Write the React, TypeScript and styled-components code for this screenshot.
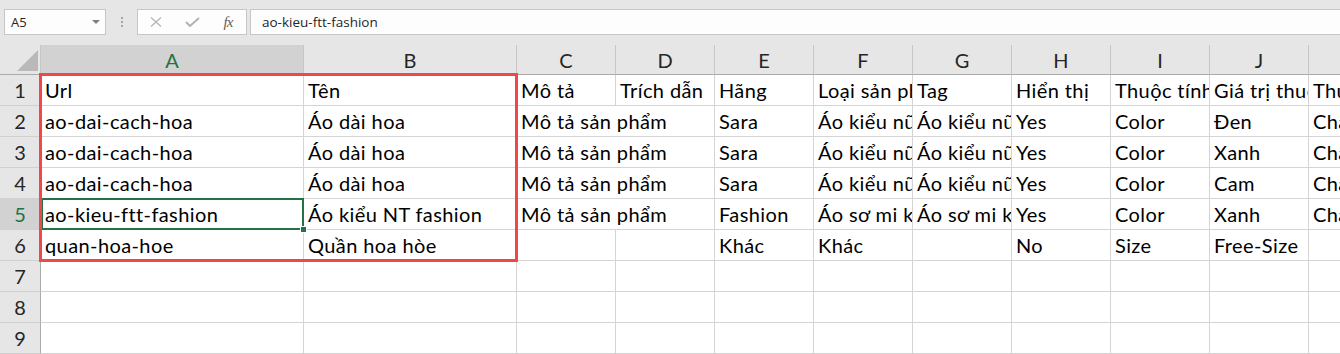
import React from 'react';
import styled, { createGlobalStyle } from 'styled-components';

const GlobalStyle = createGlobalStyle`
  html, body { margin: 0; padding: 0; background: #ffffff; overflow: hidden; }
  #root { width: 1340px; height: 354px; }
`;

const Window = styled.div`
  width: 1340px;
  height: 354px;
  overflow: hidden;
  background: #e6e6e6;
`;

const Toolbar = styled.div`
  height: 45px;
  box-sizing: border-box;
  padding: 9px 0 0 4px;
  display: flex;
  align-items: flex-start;
  background: #e6e6e6;
  font-family: "Open Sans", "Noto Sans", sans-serif;
`;

const Field = styled.div`
  height: 26px;
  box-sizing: border-box;
  border: 1px solid #c6c6c6;
  background: #fdfdfd;
`;

const NameBox = styled(Field)`
  width: 102px;
  display: flex;
  align-items: center;
  justify-content: space-between;
  padding: 0 5px 0 6px;
  font-size: 13px;
  color: #262626;
`;

const Caret = styled.span`
  width: 0;
  height: 0;
  border-left: 4px solid transparent;
  border-right: 4px solid transparent;
  border-top: 4px solid #7f7f7f;
`;

const Grip = styled.div`
  width: 31px;
  height: 26px;
  display: flex;
  flex-direction: column;
  align-items: center;
  justify-content: center;
  gap: 2px;
`;

const GripDot = styled.span`
  width: 2px;
  height: 2px;
  background: #a6a6a6;
`;

const FxBox = styled(Field)`
  width: 110px;
  display: flex;
  align-items: center;
`;

const FxSlot = styled.div`
  width: 36px;
  height: 24px;
  display: flex;
  align-items: center;
  justify-content: center;
`;

const FxGlyph = styled.span`
  font-family: "Liberation Serif", serif;
  font-style: italic;
  font-size: 15px;
  color: #5f5f5f;
  letter-spacing: -1px;
`;

const FormulaInput = styled(Field)`
  flex: 1;
  margin-left: 3px;
  margin-right: -4px;
  padding-left: 11px;
  display: flex;
  align-items: center;
  font-size: 13.5px;
  color: #262626;
`;

const Sheet = styled.div`
  position: relative;
  display: grid;
  grid-template-columns: 41px 263px 213px repeat(9, 99px);
  grid-template-rows: 30px repeat(9, 31px);
  background: #ffffff;
  font-family: Lato, "Noto Sans", sans-serif;
  font-size: 20px;
`;

const Corner = styled.div`
  position: relative;
  box-sizing: border-box;
  background: #e6e6e6;
  border-right: 1px solid #c6c6c6;
  border-bottom: 1px solid #ababab;
  &::after {
    content: "";
    position: absolute;
    left: 17px;
    top: 5px;
    width: 21px;
    height: 21px;
    background: #b9b9b9;
    clip-path: polygon(100% 0, 100% 100%, 0 100%);
  }
`;

const ColHeader = styled.div<{ $active?: boolean }>`
  box-sizing: border-box;
  background: ${(p) => (p.$active ? '#d2d2d2' : '#e6e6e6')};
  color: ${(p) => (p.$active ? '#217346' : '#262626')};
  border-right: 1px solid #c6c6c6;
  border-bottom: 1px solid #ababab;
  text-align: center;
  line-height: 29px;
  padding-top: 1px;
`;

const RowHeader = styled.div<{ $active?: boolean }>`
  box-sizing: border-box;
  background: ${(p) => (p.$active ? '#d2d2d2' : '#e6e6e6')};
  color: ${(p) => (p.$active ? '#217346' : '#262626')};
  border-right: 1px solid #ababab;
  border-bottom: 1px solid #d0d0d0;
  text-align: center;
  line-height: 30px;
`;

const Cell = styled.div<{ $span: number; $selected?: boolean }>`
  position: relative;
  grid-column: span ${(p) => p.$span};
  box-sizing: border-box;
  border-right: 1px solid #d4d4d4;
  border-bottom: 1px solid #d4d4d4;
  padding: 0 4px;
  line-height: 30px;
  letter-spacing: 0.4px;
  white-space: nowrap;
  overflow: ${(p) => (p.$selected ? 'visible' : 'hidden')};
  color: #000000;
  ${(p) =>
    p.$selected &&
    `
    &::after {
      content: "";
      position: absolute;
      left: 0;
      top: -1px;
      right: -1px;
      bottom: -1px;
      border: 2px solid #217346;
      box-sizing: border-box;
      z-index: 2;
    }
  `}
`;

const FillHandle = styled.span`
  position: absolute;
  right: -4px;
  bottom: -4px;
  width: 5px;
  height: 5px;
  background: #217346;
  border: 1px solid #ffffff;
  z-index: 3;
`;

const Highlight = styled.div`
  position: absolute;
  left: 39px;
  top: 28px;
  width: 479px;
  height: 189px;
  box-sizing: border-box;
  border: 3px solid #f0474a;
  pointer-events: none;
  z-index: 4;
`;

type CellData = string | [string, number];

const columns = ['A', 'B', 'C', 'D', 'E', 'F', 'G', 'H', 'I', 'J', 'K'];

const rows: CellData[][] = [
  ['Url', 'Tên', 'Mô tả', 'Trích dẫn', 'Hãng', 'Loại sản phẩm', 'Tag', 'Hiển thị', 'Thuộc tính', 'Giá trị thuộc tính', 'Thuộc tính 2'],
  ['ao-dai-cach-hoa', 'Áo dài hoa', ['Mô tả sản phẩm', 2], 'Sara', 'Áo kiểu nữ', 'Áo kiểu nữ', 'Yes', 'Color', 'Đen', 'Chất liệu'],
  ['ao-dai-cach-hoa', 'Áo dài hoa', ['Mô tả sản phẩm', 2], 'Sara', 'Áo kiểu nữ', 'Áo kiểu nữ', 'Yes', 'Color', 'Xanh', 'Chất liệu'],
  ['ao-dai-cach-hoa', 'Áo dài hoa', ['Mô tả sản phẩm', 2], 'Sara', 'Áo kiểu nữ', 'Áo kiểu nữ', 'Yes', 'Color', 'Cam', 'Chất liệu'],
  ['ao-kieu-ftt-fashion', 'Áo kiểu NT fashion', ['Mô tả sản phẩm', 2], 'Fashion', 'Áo sơ mi kiểu', 'Áo sơ mi kiểu', 'Yes', 'Color', 'Xanh', 'Chất liệu'],
  ['quan-hoa-hoe', 'Quần hoa hòe', '', '', 'Khác', 'Khác', '', 'No', 'Size', 'Free-Size', ''],
  ['', '', '', '', '', '', '', '', '', '', ''],
  ['', '', '', '', '', '', '', '', '', '', ''],
  ['', '', '', '', '', '', '', '', '', '', ''],
];

const XIcon = () => (
  <svg width="12" height="10" viewBox="0 0 12 10">
    <path d="M1 0.5 L11 9.5 M11 0.5 L1 9.5" stroke="#b3b3b3" strokeWidth="1.2" fill="none" />
  </svg>
);

const CheckIcon = () => (
  <svg width="15" height="10" viewBox="0 0 15 10">
    <path d="M1 5 L5 9 L14 1" stroke="#b3b3b3" strokeWidth="2" fill="none" />
  </svg>
);

export default function App() {
  return (
    <Window>
      <GlobalStyle />
      <Toolbar>
        <NameBox>
          <span>A5</span>
          <Caret />
        </NameBox>
        <Grip>
          <GripDot />
          <GripDot />
          <GripDot />
        </Grip>
        <FxBox>
          <FxSlot>
            <XIcon />
          </FxSlot>
          <FxSlot>
            <CheckIcon />
          </FxSlot>
          <FxSlot>
            <FxGlyph>fx</FxGlyph>
          </FxSlot>
        </FxBox>
        <FormulaInput>ao-kieu-ftt-fashion</FormulaInput>
      </Toolbar>
      <Sheet>
        <Corner />
        {columns.map((c) => (
          <ColHeader key={c} $active={c === 'A'}>
            {c}
          </ColHeader>
        ))}
        {rows.map((row, r) => (
          <React.Fragment key={r}>
            <RowHeader $active={r === 4}>{r + 1}</RowHeader>
            {row.map((cell, c) => {
              const text = Array.isArray(cell) ? cell[0] : cell;
              const span = Array.isArray(cell) ? cell[1] : 1;
              const selected = r === 4 && c === 0;
              return (
                <Cell key={c} $span={span} $selected={selected}>
                  {text}
                  {selected && <FillHandle />}
                </Cell>
              );
            })}
          </React.Fragment>
        ))}
        <Highlight />
      </Sheet>
    </Window>
  );
}
